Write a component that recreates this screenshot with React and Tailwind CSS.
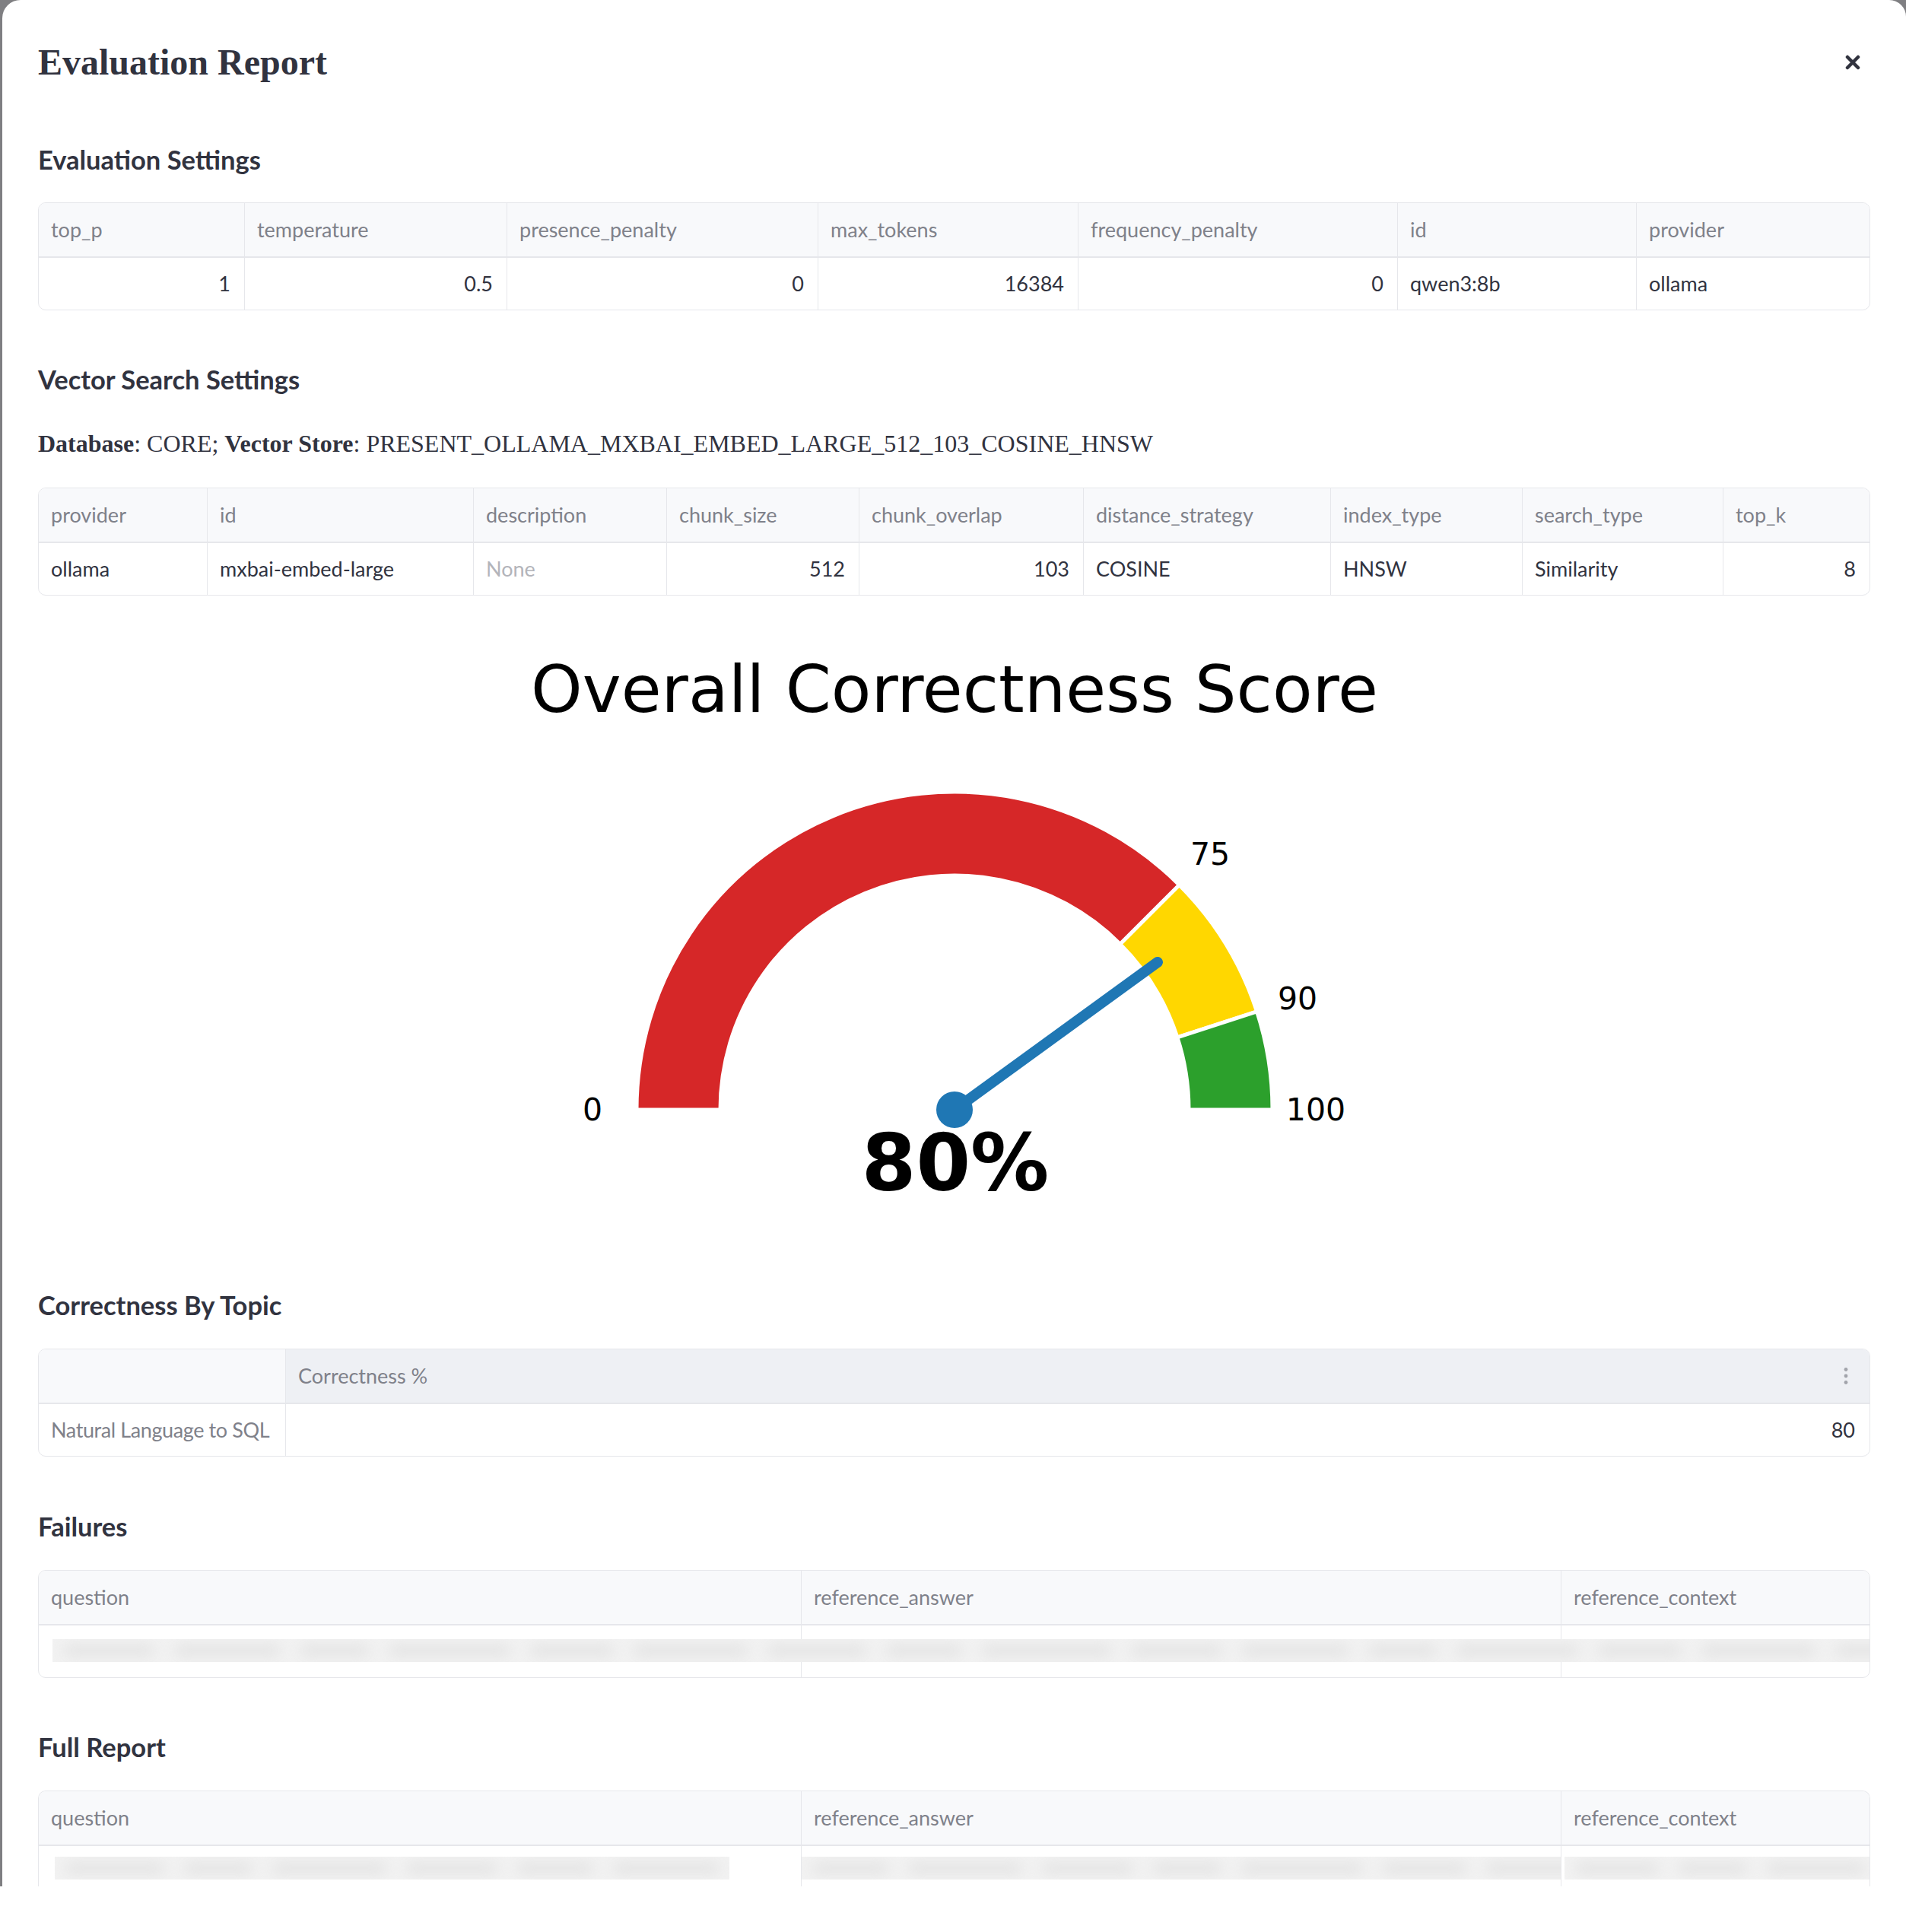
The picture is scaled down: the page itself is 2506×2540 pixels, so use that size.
import React from "react";

const BORDER = "border-[#e6e7eb]";

function HeadCell({ children, first, className = "" }) {
  return (
    <div
      className={`flex items-center pl-[16px] pr-[16px] text-[27px] whitespace-nowrap text-[#7f818a] ${
        first ? "" : "border-l border-[#e6e7eb]"
      } ${className}`}
    >
      {children}
    </div>
  );
}

function BodyCell({ children, first, right, tone = "text-[#31333f]", className = "" }) {
  return (
    <div
      className={`flex items-center pl-[16px] ${right ? "justify-end pr-[18px]" : "pr-[16px]"} text-[27px] whitespace-nowrap ${tone} ${
        first ? "" : "border-l border-[#e6e7eb]"
      } ${className}`}
    >
      {children}
    </div>
  );
}

function Blobs({ items }) {
  return (
    <div className="h-[30px] w-full bg-[#f2f2f2] flex items-center gap-[26px] px-[14px] overflow-hidden">
      {items.map((w, i) => (
        <div key={i} className="h-[14px] shrink-0 rounded-full bg-[#e2e2e2] blur-[9px]" style={{ width: w }} />
      ))}
    </div>
  );
}

function Heading({ children }) {
  return (
    <div className="h-[50px] leading-[50px] text-[34.5px] font-bold text-[#31333f]">
      {children}
    </div>
  );
}

function Gauge() {
  return (
    <svg
      width="2409"
      height="908"
      viewBox="50 783 2409 908"
      className="block"
      fontFamily="'DejaVu Sans', sans-serif"
    >
      <text x="1255" y="936" textAnchor="middle" fontSize="86" fill="#000">
        Overall Correctness Score
      </text>
      <path
        d="M 837 1459 A 418 418 0 0 1 1550.57 1163.43 L 1472.79 1241.21 A 308 308 0 0 0 947 1459 Z"
        fill="#d62728"
        stroke="#ffffff"
        strokeWidth="5"
      />
      <path
        d="M 1550.57 1163.43 A 418 418 0 0 1 1652.54 1329.83 L 1547.93 1363.82 A 308 308 0 0 0 1472.79 1241.21 Z"
        fill="#ffd700"
        stroke="#ffffff"
        strokeWidth="5"
      />
      <path
        d="M 1652.54 1329.83 A 418 418 0 0 1 1673 1459 L 1563 1459 A 308 308 0 0 0 1547.93 1363.82 Z"
        fill="#2ca02c"
        stroke="#ffffff"
        strokeWidth="5"
      />
      <line x1="1255" y1="1459" x2="1522" y2="1265" stroke="#1f77b4" strokeWidth="14" strokeLinecap="round" />
      <circle cx="1255" cy="1459" r="24" fill="#1f77b4" />
      <g fontSize="41" fill="#000" textAnchor="middle" dominantBaseline="central">
        <text x="779" y="1459">0</text>
        <text x="1591" y="1123">75</text>
        <text x="1706" y="1313">90</text>
        <text x="1730" y="1459">100</text>
      </g>
      <text x="1256" y="1565" textAnchor="middle" fontSize="103" fontWeight="bold" fill="#000">
        80%
      </text>
    </svg>
  );
}

export default function App() {
  return (
    <div className="w-[2506px] h-[2540px] bg-white overflow-hidden font-['Lato',sans-serif]">
      <div className="h-[2480px] bg-[#7f7f82] pl-[3px] overflow-hidden">
        <div className="h-full bg-white rounded-tl-[24px] rounded-tr-[22px] overflow-hidden pl-[47px] pr-[47px] pt-[52px]">
          {/* Title row */}
          <div className="h-[60px] flex items-center justify-between">
            <div className="font-['Liberation_Serif',serif] font-bold text-[48px] leading-[60px] text-[#31333f]">
              Evaluation Report
            </div>
            <svg width="20" height="20" viewBox="0 0 20 20" className="mr-[13px]">
              <path d="M3 3 L17 17 M17 3 L3 17" stroke="#31333f" strokeWidth="4.5" strokeLinecap="round" />
            </svg>
          </div>

          {/* Evaluation Settings */}
          <div className="mt-[73px]">
            <Heading>Evaluation Settings</Heading>
          </div>
          <div className={`mt-[31px] rounded-[10px] border ${BORDER} overflow-hidden`}>
            <div className="grid grid-cols-[270px_345px_409px_342px_420px_314px_1fr] h-[72px] bg-[#f8f9fb] border-b-2 border-[#e6e7eb]">
              <HeadCell first>top_p</HeadCell>
              <HeadCell>temperature</HeadCell>
              <HeadCell>presence_penalty</HeadCell>
              <HeadCell>max_tokens</HeadCell>
              <HeadCell>frequency_penalty</HeadCell>
              <HeadCell>id</HeadCell>
              <HeadCell>provider</HeadCell>
            </div>
            <div className="grid grid-cols-[270px_345px_409px_342px_420px_314px_1fr] h-[68px]">
              <BodyCell first right>1</BodyCell>
              <BodyCell right>0.5</BodyCell>
              <BodyCell right>0</BodyCell>
              <BodyCell right>16384</BodyCell>
              <BodyCell right>0</BodyCell>
              <BodyCell>qwen3:8b</BodyCell>
              <BodyCell>ollama</BodyCell>
            </div>
          </div>

          {/* Vector Search Settings */}
          <div className="mt-[66px]">
            <Heading>Vector Search Settings</Heading>
          </div>
          <div className="mt-[39px] h-[40px] leading-[40px] font-['Liberation_Serif',serif] text-[32px] text-[#31333f] whitespace-nowrap">
            <span className="font-bold">Database</span>: CORE; <span className="font-bold">Vector Store</span>:
            PRESENT_OLLAMA_MXBAI_EMBED_LARGE_512_103_COSINE_HNSW
          </div>
          <div className={`mt-[38px] rounded-[10px] border ${BORDER} overflow-hidden`}>
            <div className="grid grid-cols-[221px_350px_254px_253px_295px_325px_252px_264px_1fr] h-[72px] bg-[#f8f9fb] border-b-2 border-[#e6e7eb]">
              <HeadCell first>provider</HeadCell>
              <HeadCell>id</HeadCell>
              <HeadCell>description</HeadCell>
              <HeadCell>chunk_size</HeadCell>
              <HeadCell>chunk_overlap</HeadCell>
              <HeadCell>distance_strategy</HeadCell>
              <HeadCell>index_type</HeadCell>
              <HeadCell>search_type</HeadCell>
              <HeadCell>top_k</HeadCell>
            </div>
            <div className="grid grid-cols-[221px_350px_254px_253px_295px_325px_252px_264px_1fr] h-[68px]">
              <BodyCell first>ollama</BodyCell>
              <BodyCell>mxbai-embed-large</BodyCell>
              <BodyCell tone="text-[#b3b4ba]">None</BodyCell>
              <BodyCell right>512</BodyCell>
              <BodyCell right>103</BodyCell>
              <BodyCell>COSINE</BodyCell>
              <BodyCell>HNSW</BodyCell>
              <BodyCell>Similarity</BodyCell>
              <BodyCell right>8</BodyCell>
            </div>
          </div>

          {/* Gauge chart */}
          <Gauge />

          {/* Correctness By Topic */}
          <Heading>Correctness By Topic</Heading>
          <div className={`mt-[32px] rounded-[10px] border ${BORDER} overflow-hidden`}>
            <div className="grid grid-cols-[324px_1fr] h-[72px] border-b-2 border-[#e6e7eb]">
              <HeadCell first className="bg-[#f8f9fb]"></HeadCell>
              <HeadCell className="bg-[#eef0f4] justify-between pr-[28px]">
                <span>Correctness %</span>
                <svg width="6" height="24" viewBox="0 0 6 24">
                  <circle cx="3" cy="3.5" r="2.4" fill="#a2a4ab" />
                  <circle cx="3" cy="12" r="2.4" fill="#a2a4ab" />
                  <circle cx="3" cy="20.5" r="2.4" fill="#a2a4ab" />
                </svg>
              </HeadCell>
            </div>
            <div className="grid grid-cols-[324px_1fr] h-[68px]">
              <BodyCell first tone="text-[#7f818a]" className="tracking-[-0.4px] text-[26px]">
                Natural Language to SQL
              </BodyCell>
              <BodyCell right className="pr-[19px]">80</BodyCell>
            </div>
          </div>

          {/* Failures */}
          <div className="mt-[67px]">
            <Heading>Failures</Heading>
          </div>
          <div className={`mt-[32px] rounded-[10px] border ${BORDER} overflow-hidden`}>
            <div className="grid grid-cols-[1002px_999px_1fr] h-[72px] bg-[#f8f9fb] border-b-2 border-[#e6e7eb]">
              <HeadCell first>question</HeadCell>
              <HeadCell>reference_answer</HeadCell>
              <HeadCell>reference_context</HeadCell>
            </div>
            <div className="relative grid grid-cols-[1002px_999px_1fr] h-[68px]">
              <BodyCell first></BodyCell>
              <BodyCell></BodyCell>
              <BodyCell></BodyCell>
              <div className="absolute left-[18px] right-0 top-[18px]">
                <Blobs items={[120, 140, 90, 160, 110, 150, 130, 100, 170, 120, 140, 90, 160, 110, 150, 130, 100, 120]} />
              </div>
            </div>
          </div>

          {/* Full Report */}
          <div className="mt-[66px]">
            <Heading>Full Report</Heading>
          </div>
          <div className={`mt-[32px] rounded-t-[10px] border border-b-0 ${BORDER} overflow-hidden`}>
            <div className="grid grid-cols-[1002px_999px_1fr] h-[72px] bg-[#f8f9fb] border-b-2 border-[#e6e7eb]">
              <HeadCell first>question</HeadCell>
              <HeadCell>reference_answer</HeadCell>
              <HeadCell>reference_context</HeadCell>
            </div>
            <div className="grid grid-cols-[1002px_999px_1fr] h-[68px]">
              <div className="flex items-start pt-[14px] pl-[21px] pr-[94px]">
                <Blobs items={[130, 90, 150, 120, 100, 140, 110]} />
              </div>
              <div className="flex items-start pt-[14px] border-l border-[#e6e7eb]">
                <Blobs items={[100, 150, 120, 90, 160, 110, 130, 100]} />
              </div>
              <div className="flex items-start pt-[14px] pl-[4px] pr-[2px] border-l border-[#e6e7eb]">
                <Blobs items={[110, 90, 130]} />
              </div>
            </div>
          </div>
        </div>
      </div>
    </div>
  );
}
